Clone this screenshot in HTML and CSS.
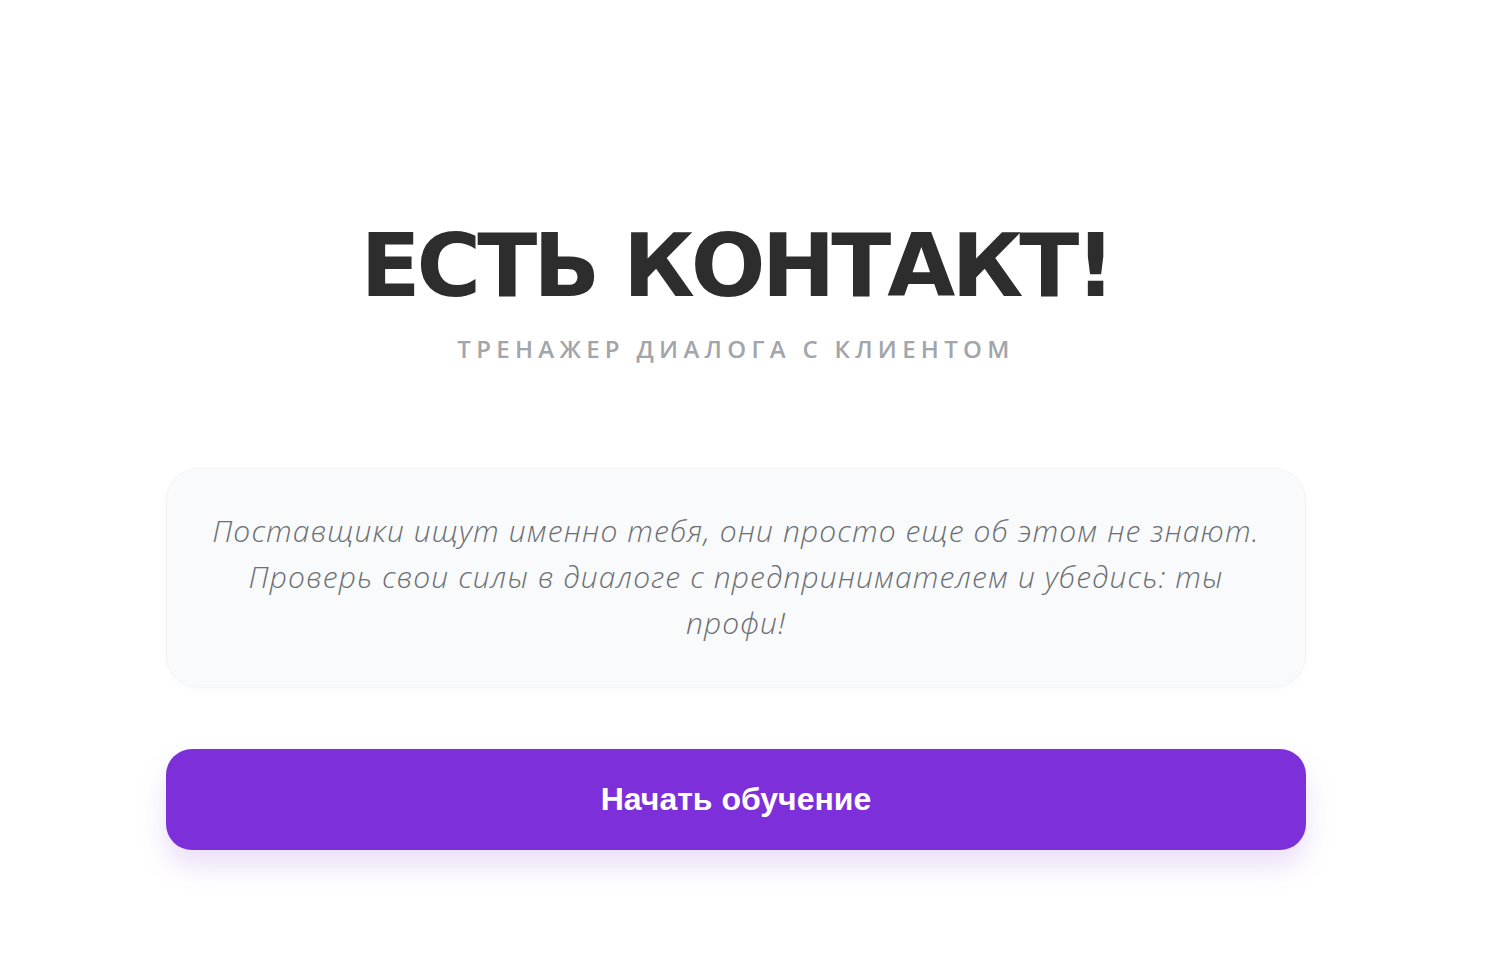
FILE: index.html
```html
<!DOCTYPE html>
<html lang="ru">
<head>
  <meta charset="UTF-8">
  <title>Есть контакт!</title>
  <meta name="viewport" content="width=device-width, initial-scale=1.0">
  <link rel="stylesheet" href="styles.css">
</head>
<body>

<main class="intro">
  <!-- Header -->
  <header class="intro-head">
    <h1>ЕСТЬ КОНТАКТ!</h1>
    <p class="subtitle">Тренажер диалога с клиентом</p>
  </header>

  <!-- Description -->
  <div class="intro-card">
    <p>Поставщики ищут именно тебя, они просто еще об этом не знают. Проверь свои силы в диалоге с предпринимателем и убедись: ты профи!</p>
  </div>

  <button class="start-btn" type="button">Начать обучение</button>
</main>

</body>
</html>
```

FILE: styles.css
```css
/* Global styles */
body {
  font-family: 'DejaVu Sans', sans-serif;
  margin: 0;
  padding: 0 14px 0 0;
  background: #fff;
  color: #2d2d2d;
}

.intro {
  max-width: 1140px;
  margin: 0 auto;
  padding: 222px 0 110px;
}

/* Header */
.intro-head {
  text-align: center;
}

.intro-head h1 {
  font-family: 'DejaVu Sans', sans-serif;
  font-weight: 700;
  font-size: 88px;
  line-height: 1;
  letter-spacing: -4px;
  margin: 0;
  color: #2d2d2d;
}

.subtitle {
  font-family: 'Open Sans', sans-serif;
  font-weight: 600;
  font-size: 24px;
  line-height: 1.2;
  letter-spacing: 5.3px;
  text-transform: uppercase;
  color: #a2a5a9;
  margin: 25px 0 0;
}

/* Description card */
.intro-card {
  margin-top: 104px;
  background: #f8fafb;
  border: 1px solid #f3f5f7;
  border-radius: 32px;
  padding: 39px 40px 41px;
  text-align: center;
  box-shadow: 0 2px 10px rgba(0, 0, 0, 0.02);
}

.intro-card p {
  margin: 0;
  font-family: 'Open Sans', sans-serif;
  font-style: italic;
  font-weight: 300;
  font-size: 30px;
  line-height: 46px;
  letter-spacing: 1.1px;
  color: #6c6f73;
}

/* Start button */
.start-btn {
  display: block;
  width: 100%;
  height: 101px;
  margin-top: 61px;
  border: none;
  border-radius: 26px;
  background: #7d30d9;
  color: #fff;
  font-family: 'Liberation Sans', sans-serif;
  font-weight: 700;
  font-size: 32px;
  cursor: pointer;
  box-shadow: 0 16px 28px rgba(125, 48, 217, 0.16);
}
```
